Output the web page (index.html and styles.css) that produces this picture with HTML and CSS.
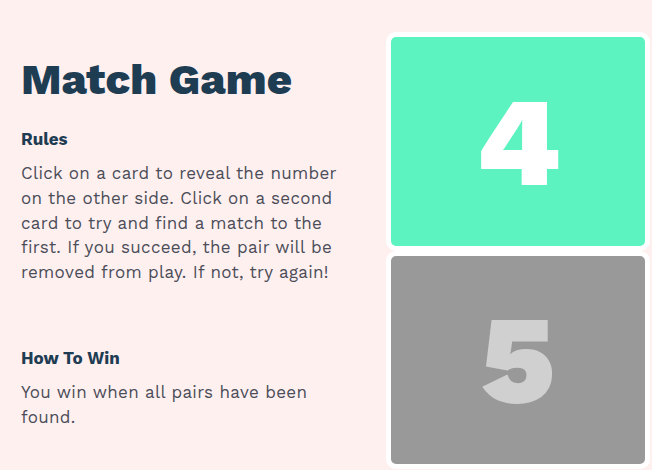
FILE: index.html
```html
<!DOCTYPE html>
<html lang="en">
<head>
<meta charset="utf-8">
<title>Match Game</title>
<link rel="stylesheet" href="styles.css">
</head>
<body>
<main class="layout">
  <section class="info">
    <h1 class="title">Match Game</h1>
    <h2 class="subtitle">Rules</h2>
    <p class="text">Click on a card to reveal the number on the other side. Click on a second card to try and find a match to the first. If you succeed, the pair will be removed from play. If not, try again!</p>
    <h2 class="subtitle subtitle-win">How To Win</h2>
    <p class="text">You win when all pairs have been found.</p>
  </section>
  <section class="board">
    <div class="card card-revealed"><span class="num">4</span></div>
    <div class="card card-hidden"><span class="num">5</span></div>
  </section>
</main>
</body>
</html>
```
FILE: styles.css
```css
html, body {
  margin: 0;
  padding: 0;
}
body {
  background: #fff0f0;
  font-family: "Work Sans", Inter, "Open Sans", sans-serif;
  overflow: hidden;
}
.layout {
  display: flex;
  align-items: flex-start;
}
.info {
  box-sizing: border-box;
  width: 386px;
  padding: 0 40px 0 21px;
}
.title {
  margin: 58px 0 0;
  font-size: 43.6px;
  line-height: 1;
  font-weight: 800;
  color: #1e3d53;
}
.subtitle {
  margin: 27px 0 0;
  font-size: 17px;
  line-height: 20px;
  font-weight: 700;
  color: #1e3d53;
}
.subtitle-win {
  margin-top: 62.5px;
}
.text {
  margin: 12.5px 0 0;
  font-size: 17px;
  line-height: 24.8px;
  color: #4b4d58;
  letter-spacing: 0.3px;
}
.board {
  display: flex;
  flex-direction: column;
  width: 264px;
  padding-top: 32px;
}
.card {
  box-sizing: border-box;
  height: 219px;
  border: 5px solid #ffffff;
  border-radius: 10px;
  display: flex;
  align-items: center;
  justify-content: center;
}
.card-revealed {
  background: #5cf3c1;
  color: #ffffff;
}
.card-hidden {
  height: 218px;
  background: #999999;
  color: #d0d0d0;
}
.num {
  font-size: 126px;
  font-weight: 900;
  line-height: 1;
}
```
